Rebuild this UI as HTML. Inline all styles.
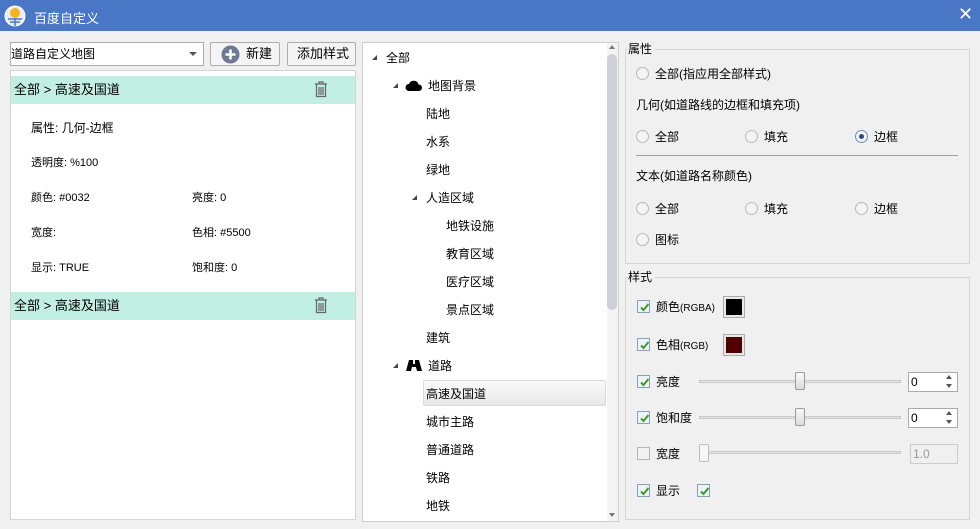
<!DOCTYPE html><html><head><meta charset="utf-8"><style>
*{margin:0;padding:0;box-sizing:border-box}
body{width:980px;height:529px;background:#f0f0f0;font-family:"Liberation Sans","Noto Sans CJK SC",sans-serif;font-size:12px;color:#000;position:relative;overflow:hidden}
.a{position:absolute;white-space:nowrap}
.t{font-size:12px;line-height:14px}
.rad{position:absolute;width:13px;height:13px;border:1px solid #b8b8b8;border-radius:50%;background:#f4f4f4}
.chk{position:absolute;width:13px;height:13px;border:1px solid #8aa0b8;background:#eef3f8}
.chk svg{position:absolute;left:1px;top:1px}
.tri{position:absolute;width:0;height:0;border-left:5px solid transparent;border-bottom:5px solid #444}
</style></head><body>
<div class="a" style="left:0;top:0;width:980px;height:31px;background:#4a76c6"></div>
<svg class="a" style="left:4px;top:5px" width="22" height="22"><circle cx="11" cy="11" r="10" fill="#e8eef8" stroke="#fff"/><circle cx="11" cy="8" r="5" fill="#f3b51b"/><path d="M4 14h14M11 13v8M6 17h10" stroke="#4a76c6" stroke-width="1.5"/></svg>
<div class="a" style="left:34px;top:8px;color:#fff;font-size:13px">百度自定义</div>
<div class="a" style="left:958px;top:4px;color:#fff;font-size:18px">✕</div>

<div class="a" style="left:10px;top:42px;width:194px;height:24px;background:#fff;border:1px solid #acacac"></div>
<div class="a t" style="left:11px;top:47px">道路自定义地图</div>
<div class="a" style="left:189px;top:52px;border-left:4px solid transparent;border-right:4px solid transparent;border-top:4px solid #555"></div>
<div class="a" style="left:210px;top:42px;width:70px;height:24px;background:#f4f4f4;border:1px solid #adadad;border-radius:2px"></div>
<svg class="a" style="left:221px;top:45px" width="19" height="19"><circle cx="9.5" cy="9.5" r="9" fill="#6d7a95"/><path d="M9.5 4.5v10M4.5 9.5h10" stroke="#fff" stroke-width="2.6"/></svg>
<div class="a t" style="left:246px;top:47px;font-size:13px">新建</div>
<div class="a" style="left:287px;top:42px;width:69px;height:24px;background:#f4f4f4;border:1px solid #adadad;border-radius:2px"></div>
<div class="a t" style="left:297px;top:47px;font-size:13px">添加样式</div>

<div class="a" style="left:10px;top:70px;width:346px;height:450px;background:#fff;border:1px solid #d4d4d4"></div>
<div class="a" style="left:11px;top:76px;width:344px;height:28px;background:#c1efe3"></div>
<div class="a t" style="left:14px;top:83px;font-size:13px">全部 &gt; 高速及国道</div>
<div class="a" style="left:11px;top:292px;width:344px;height:28px;background:#c1efe3"></div>
<div class="a t" style="left:14px;top:299px;font-size:13px">全部 &gt; 高速及国道</div>
<svg class="a" style="left:314px;top:81px" width="14" height="17"><path d="M1 3h12M5 3V1h4v2M2.5 3.5v12h9v-12M5 6v8M7 6v8M9 6v8" stroke="#666" fill="none" stroke-width="1.2"/></svg>
<svg class="a" style="left:314px;top:297px" width="14" height="17"><path d="M1 3h12M5 3V1h4v2M2.5 3.5v12h9v-12M5 6v8M7 6v8M9 6v8" stroke="#666" fill="none" stroke-width="1.2"/></svg>
<div class="a t" style="left:31px;top:121px">属性:  几何-边框</div>
<div class="a t" style="left:31px;top:156px;font-size:11px">透明度: %100</div>
<div class="a t" style="left:31px;top:191px;font-size:11px">颜色: #0032</div>
<div class="a t" style="left:192px;top:191px;font-size:11px">亮度: 0</div>
<div class="a t" style="left:31px;top:226px;font-size:11px">宽度:</div>
<div class="a t" style="left:192px;top:226px;font-size:11px">色相: #5500</div>
<div class="a t" style="left:31px;top:261px;font-size:11px">显示: TRUE</div>
<div class="a t" style="left:192px;top:261px;font-size:11px">饱和度: 0</div>

<div class="a" style="left:362px;top:42px;width:257px;height:480px;background:#fff;border:1px solid #cfcfcf"></div>
<div class="a" style="left:607px;top:43px;width:11px;height:478px;background:#f4f4f4"></div>
<div class="a" style="left:607px;top:54px;width:10px;height:256px;background:#cdd0d6;border-radius:5px"></div>
<div class="a" style="left:609px;top:45px;border-left:3px solid transparent;border-right:3px solid transparent;border-bottom:4px solid #777"></div>
<div class="a" style="left:609px;top:513px;border-left:3px solid transparent;border-right:3px solid transparent;border-top:4px solid #777"></div>
<div class="tri" style="left:372px;top:55px"></div>
<div class="a t" style="left:386px;top:51px">全部</div>
<div class="tri" style="left:393px;top:83px"></div>
<svg class="a" style="left:405px;top:80px" width="18" height="12"><path d="M4 11a3.5 3.5 0 0 1 0-7 5 5 0 0 1 9.5 0.5 3.2 3.2 0 0 1 0.5 6.5z" fill="#000"/></svg>
<div class="a t" style="left:428px;top:79px">地图背景</div>
<div class="a t" style="left:426px;top:107px">陆地</div>
<div class="a t" style="left:426px;top:135px">水系</div>
<div class="a t" style="left:426px;top:163px">绿地</div>
<div class="tri" style="left:412px;top:195px"></div>
<div class="a t" style="left:426px;top:191px">人造区域</div>
<div class="a t" style="left:446px;top:219px">地铁设施</div>
<div class="a t" style="left:446px;top:247px">教育区域</div>
<div class="a t" style="left:446px;top:275px">医疗区域</div>
<div class="a t" style="left:446px;top:303px">景点区域</div>
<div class="a t" style="left:426px;top:331px">建筑</div>
<div class="tri" style="left:393px;top:363px"></div>
<svg class="a" style="left:405px;top:358px" width="18" height="14"><path d="M1 13L4 2h4v4h2V2h4l3 11h-5l-1-4H7l-1 4z" fill="#000"/></svg>
<div class="a t" style="left:428px;top:359px">道路</div>
<div class="a" style="left:423px;top:380px;width:183px;height:26px;border:1px solid #dadada;border-radius:2px;background:linear-gradient(#fafafa,#e8e8e8)"></div>
<div class="a t" style="left:426px;top:387px">高速及国道</div>
<div class="a t" style="left:426px;top:415px">城市主路</div>
<div class="a t" style="left:426px;top:443px">普通道路</div>
<div class="a t" style="left:426px;top:471px">铁路</div>
<div class="a t" style="left:426px;top:499px">地铁</div>

<div class="a" style="left:625px;top:49px;width:345px;height:215px;border:1px solid #d5d5d5"></div>
<div class="a t" style="left:628px;top:42px;background:#f0f0f0;padding-right:3px">属性</div>
<div class="rad" style="left:636px;top:67px"></div><div class="a t" style="left:655px;top:67px">全部(指应用全部样式)</div>
<div class="a t" style="left:636px;top:98px">几何(如道路线的边框和填充项)</div>
<div class="rad" style="left:636px;top:130px"></div><div class="a t" style="left:655px;top:130px">全部</div>
<div class="rad" style="left:745px;top:130px"></div><div class="a t" style="left:764px;top:130px">填充</div>
<div class="rad" style="left:855px;top:130px;border-color:#6f8fb8"></div><div class="a" style="left:859px;top:134px;width:5px;height:5px;border-radius:50%;background:#2e4d7a"></div><div class="a t" style="left:874px;top:130px">边框</div>
<div class="a" style="left:636px;top:155px;width:322px;height:1px;background:#a0a0a0"></div>
<div class="a t" style="left:636px;top:169px">文本(如道路名称颜色)</div>
<div class="rad" style="left:636px;top:202px"></div><div class="a t" style="left:655px;top:202px">全部</div>
<div class="rad" style="left:745px;top:202px"></div><div class="a t" style="left:764px;top:202px">填充</div>
<div class="rad" style="left:855px;top:202px"></div><div class="a t" style="left:874px;top:202px">边框</div>
<div class="rad" style="left:636px;top:233px"></div><div class="a t" style="left:655px;top:233px">图标</div>

<div class="a" style="left:625px;top:277px;width:345px;height:243px;border:1px solid #d5d5d5"></div>
<div class="a t" style="left:628px;top:270px;background:#f0f0f0;padding-right:3px">样式</div>
<svg width="0" height="0" style="position:absolute"><defs><symbol id="ck" viewBox="0 0 11 11"><path d="M2 5.5l2.5 2.5 5-6" stroke="#3f9a2c" stroke-width="2" fill="none"/></symbol></defs></svg>
<div class="chk" style="left:637px;top:300px"><svg width="11" height="11"><use href="#ck"/></svg></div><div class="a t" style="left:656px;top:300px">颜色<span style="font-size:10px">(RGBA)</span></div>
<div class="a" style="left:723px;top:296px;width:22px;height:22px;border:1px solid #aaa;padding:2px;background:#e8e8e8"><div style="width:100%;height:100%;background:#000"></div></div>
<div class="chk" style="left:637px;top:338px"><svg width="11" height="11"><use href="#ck"/></svg></div><div class="a t" style="left:656px;top:338px">色相<span style="font-size:10px">(RGB)</span></div>
<div class="a" style="left:723px;top:334px;width:22px;height:22px;border:1px solid #aaa;padding:2px;background:#e8e8e8"><div style="width:100%;height:100%;background:#4f0000"></div></div>
<div class="chk" style="left:637px;top:375px"><svg width="11" height="11"><use href="#ck"/></svg></div><div class="a t" style="left:656px;top:375px">亮度</div>
<div class="a" style="left:699px;top:380px;width:202px;height:3px;border:1px solid #c8c8c8;background:#e6e6e6"></div>
<div class="a" style="left:795px;top:372px;width:10px;height:18px;border:1px solid #999;border-radius:2px;background:linear-gradient(#f8f8f8,#ddd)"></div>
<div class="a" style="left:908px;top:372px;width:50px;height:20px;border:1px solid #aaa;background:#fff"></div><div class="a t" style="left:911px;top:375px">0</div>
<div class="a" style="left:946px;top:375px;border-left:3px solid transparent;border-right:3px solid transparent;border-bottom:4px solid #555"></div><div class="a" style="left:946px;top:384px;border-left:3px solid transparent;border-right:3px solid transparent;border-top:4px solid #555"></div>
<div class="chk" style="left:637px;top:411px"><svg width="11" height="11"><use href="#ck"/></svg></div><div class="a t" style="left:656px;top:411px">饱和度</div>
<div class="a" style="left:699px;top:416px;width:202px;height:3px;border:1px solid #c8c8c8;background:#e6e6e6"></div>
<div class="a" style="left:795px;top:408px;width:10px;height:18px;border:1px solid #999;border-radius:2px;background:linear-gradient(#f8f8f8,#ddd)"></div>
<div class="a" style="left:908px;top:408px;width:50px;height:20px;border:1px solid #aaa;background:#fff"></div><div class="a t" style="left:911px;top:411px">0</div>
<div class="a" style="left:946px;top:411px;border-left:3px solid transparent;border-right:3px solid transparent;border-bottom:4px solid #555"></div><div class="a" style="left:946px;top:420px;border-left:3px solid transparent;border-right:3px solid transparent;border-top:4px solid #555"></div>
<div class="chk" style="left:637px;top:447px;border-color:#b5b5b5;background:#f2f2f2"></div><div class="a t" style="left:656px;top:447px">宽度</div>
<div class="a" style="left:699px;top:451px;width:202px;height:3px;border:1px solid #c8c8c8;background:#e6e6e6"></div>
<div class="a" style="left:699px;top:444px;width:10px;height:18px;border:1px solid #bbb;border-radius:2px;background:#f6f6f6"></div>
<div class="a" style="left:910px;top:444px;width:48px;height:20px;border:1px solid #ccc;background:#f0f0f0"></div><div class="a t" style="left:913px;top:447px;color:#999">1.0</div>
<div class="chk" style="left:637px;top:484px"><svg width="11" height="11"><use href="#ck"/></svg></div><div class="a t" style="left:656px;top:484px">显示</div>
<div class="chk" style="left:697px;top:484px"><svg width="11" height="11"><use href="#ck"/></svg></div>
</body></html>
